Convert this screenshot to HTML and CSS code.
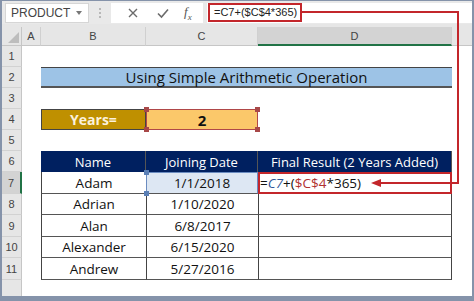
FILE: index.html
```html
<!DOCTYPE html>
<html>
<head>
<meta charset="utf-8">
<link rel="stylesheet" href="styles.css">
</head>
<body>
<div class="frame">
  <div class="fbar">
    <div class="namebox"><span>PRODUCT</span><span class="dd"></span></div>
    <div class="dots"><i></i><i></i><i></i></div>
    <div class="btns">
      <svg class="ic" width="12" height="12" viewBox="0 0 12 12"><path d="M2 2L10 10M10 2L2 10" stroke="#6b6b6b" stroke-width="1.4" fill="none"/></svg>
      <svg class="ic" width="14" height="12" viewBox="0 0 14 12"><path d="M2 6.5L5.5 10L12 2.5" stroke="#6b6b6b" stroke-width="1.6" fill="none"/></svg>
      <span class="fx">f<sub>x</sub></span>
    </div>
    <div class="formula"><span class="fbox">=C7+($C$4*365)</span></div>
  </div>
  <div class="gap"></div>
  <div class="sheet">
    <div class="corner"><span class="tri"></span></div>
    <div class="ch">A</div><div class="ch">B</div><div class="ch">C</div><div class="ch sel">D</div><div class="ch last"></div>

    <div class="rh">1</div><div class="c"></div><div class="c"></div><div class="c"></div><div class="c"></div><div class="c"></div>

    <div class="rh">2</div><div class="c"></div><div class="title">Using Simple Arithmetic Operation</div><div class="c"></div>

    <div class="rh">3</div><div class="c"></div><div class="c"></div><div class="c"></div><div class="c"></div><div class="c"></div>

    <div class="rh">4</div><div class="c"></div><div class="years">Years=</div><div class="yval">2<i class="h tl"></i><i class="h tr"></i><i class="h bl"></i><i class="h br"></i></div><div class="c"></div><div class="c"></div>

    <div class="rh">5</div><div class="c"></div><div class="c"></div><div class="c"></div><div class="c"></div><div class="c"></div>

    <div class="rh">6</div><div class="c"></div><div class="th">Name</div><div class="th">Joining Date</div><div class="th">Final Result (2 Years Added)</div><div class="c"></div>

    <div class="rh act">7</div><div class="c"></div><div class="td">Adam</div><div class="td csel">1/1/2018<i class="hb tl"></i><i class="hb bl"></i></div><div class="td dcol dsel"><span class="f">=<span class="ref1">C7</span>+(<span class="ref2">$C$4</span>*365)</span></div><div class="c"></div>

    <div class="rh">8</div><div class="c"></div><div class="td">Adrian</div><div class="td">1/10/2020</div><div class="td dcol"></div><div class="c"></div>

    <div class="rh">9</div><div class="c"></div><div class="td">Alan</div><div class="td">6/8/2017</div><div class="td dcol"></div><div class="c"></div>

    <div class="rh">10</div><div class="c"></div><div class="td">Alexander</div><div class="td">6/15/2020</div><div class="td dcol"></div><div class="c"></div>

    <div class="rh">11</div><div class="c"></div><div class="td">Andrew</div><div class="td">5/27/2016</div><div class="td dcol"></div><div class="c"></div>

    <div class="rh tail"></div><div class="c"></div><div class="c"></div><div class="c"></div><div class="c"></div><div class="c"></div>
  </div>
  <svg class="arrow" width="474" height="301" viewBox="0 0 474 301">
    <path d="M300 12 H458 V183 H378" stroke="#c3262b" stroke-width="2" fill="none"/>
    <path d="M371 183 L381 179 L381 187 Z" fill="#c3262b"/>
  </svg>
</div>
</body>
</html>
```
FILE: styles.css
```css
* { box-sizing: border-box; }
html, body { margin: 0; padding: 0; }
body { width: 474px; height: 301px; overflow: hidden; background: #6a7b92; font-family: "Liberation Sans", Arial, sans-serif; }
.frame { position: relative; width: 474px; height: 301px; padding: 1px 2px 5px 2px; background: #8593aa; }
.fbar { display: flex; align-items: center; height: 23px; background: #e9e9e9; }
.namebox { display: flex; align-items: center; justify-content: space-between; margin-left: 3px; width: 84px; height: 20px; background: #fff; border: 1px solid #d6d6d6; padding: 0 6px 0 5px; font-size: 12px; color: #444; }
.dd { width: 0; height: 0; border-left: 3px solid transparent; border-right: 3px solid transparent; border-top: 4px solid #777; }
.dots { display: flex; flex-direction: column; gap: 2px; width: 22px; align-items: center; }
.dots i { width: 2px; height: 2px; background: #b8b8b8; }
.btns { display: flex; align-items: center; width: 92px; height: 20px; background: #fff; padding-left: 16px; }
.ic { margin-right: 17px; }
.btns .ic:nth-child(2) { margin-right: 14px; }
.fx { font-family: "Liberation Serif", serif; font-style: italic; font-size: 13px; color: #555; }
.fx sub { font-size: 9px; }
.formula { flex: 1; height: 20px; margin-left: 4px; background: #fff; display: flex; align-items: center; }
.fbox { display: inline-block; border: 2px solid #c3262b; height: 19px; line-height: 15px; padding: 0 3px 0 4px; font-size: 11px; color: #222; margin-left: 1px; }
.gap { height: 3px; background: #e6e6e6; }
.sheet { display: grid; grid-template-columns: 20px 19px 105px 112px 194px 20px; grid-template-rows: 19px 21px 21px 21px 21px 21px 21px 22px 21px 22px 21px 22px 1fr; height: 269px; background: #fff; }
.corner { background: #e6e6e6; border-right: 1px solid #c6c6c6; border-bottom: 1px solid #c6c6c6; position: relative; }
.tri { position: absolute; right: 2px; bottom: 2px; width: 0; height: 0; border-left: 11px solid transparent; border-bottom: 11px solid #bdbdbd; }
.ch { background: #e6e6e6; border-right: 1px solid #d0d0d0; border-bottom: 1px solid #c6c6c6; font-size: 11px; color: #444; display: flex; align-items: center; justify-content: center; }
.ch.sel { background: #d3d3d3; border-bottom: 2px solid #217346; }
.ch.last { border-right: none; }
.rh { background: #e6e6e6; border-right: 1px solid #c6c6c6; border-bottom: 1px solid #d2d2d2; font-size: 11px; color: #444; display: flex; align-items: center; justify-content: center; }
.rh.act { background: #d3d3d3; border-right: 2px solid #217346; }
.rh.tail { border-bottom: none; }
.c { background: #fff; }
.title { grid-column: span 3; background: #9dc3e6; border-top: 1px solid #444; border-bottom: 2px solid #555; font-family: "Open Sans", sans-serif; font-size: 15px; color: #111; display: flex; align-items: center; justify-content: center; }
.years { background: #bf9000; border: 1px solid #444; font-family: "Open Sans", sans-serif; font-weight: 700; font-size: 14px; color: #fbf1dc; display: flex; align-items: center; justify-content: center; }
.yval { position: relative; background: #fbc86a; border: 1px solid #b04848; font-family: "Open Sans", sans-serif; font-weight: 700; font-size: 15px; color: #111; display: flex; align-items: center; justify-content: center; }
.h, .hb { position: absolute; width: 5px; height: 5px; background: #a84848; }
.hb { background: #5a7fb5; }
.tl { left: -3px; top: -3px; }
.tr { right: -3px; top: -3px; }
.bl { left: -3px; bottom: -3px; }
.br { right: -3px; bottom: -3px; }
.th { background: #002060; color: #fff; font-family: "Open Sans", sans-serif; font-size: 13px; display: flex; align-items: center; justify-content: center; border-right: 1px solid #555; }
.td { background: #fff; border-left: 1px solid #444; border-bottom: 1px solid #555; font-family: "Open Sans", sans-serif; font-size: 13.5px; color: #111; display: flex; align-items: center; justify-content: center; }
.dcol { border-right: 1px solid #444; }
.csel { position: relative; background: #dde7f3; border: 1px solid #6b8cc0; border-bottom: 1px solid #555; }
.dsel { justify-content: flex-start; border: 2px solid #c3262b; padding-left: 0; }
.f { font-size: 13.5px; }
.ref1 { color: #2f5597; font-style: italic; }
.ref2 { color: #b03030; }
.arrow { position: absolute; left: 0; top: 0; pointer-events: none; }
```
